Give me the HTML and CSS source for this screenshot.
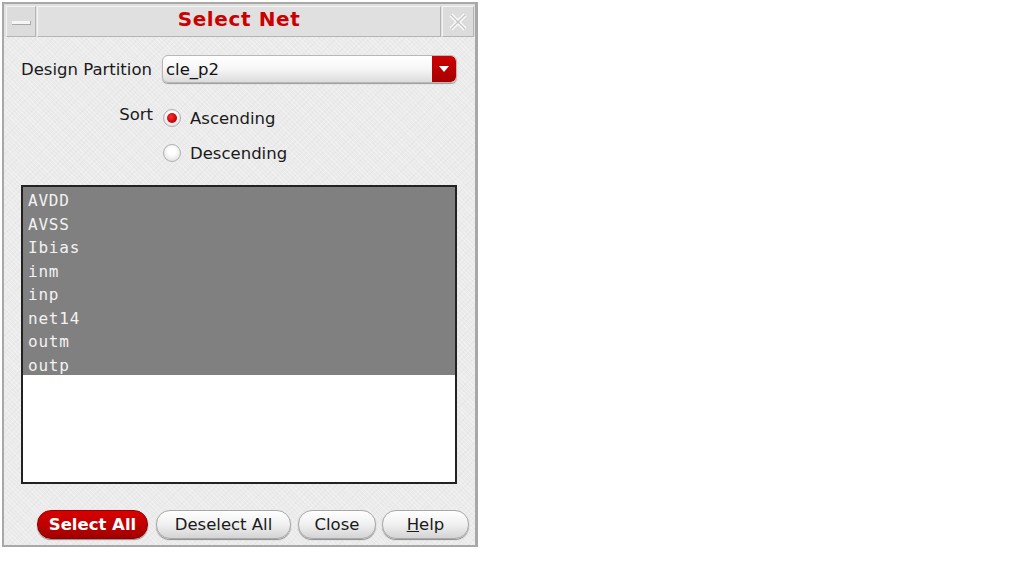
FILE: index.html
```html
<!DOCTYPE html>
<html>
<head>
<meta charset="utf-8">
<link rel="stylesheet" href="styles.css">
</head>
<body>
<div class="dialog">
  <div class="titlebar">
    <div class="tb-btn min"><span class="dash"></span></div>
    <div class="title">Select Net</div>
    <div class="tb-btn close">
      <svg width="22" height="22" viewBox="0 0 22 22"><path d="M4 4 L18 18 M18 4 L4 18" stroke="#fbfbfb" stroke-width="4" fill="none"/><path d="M4 4 L18 18 M18 4 L4 18" stroke="#c4c4c4" stroke-width="1.4" fill="none"/></svg>
    </div>
  </div>
  <div class="body">
    <div class="row-partition">
      <span class="label">Design Partition</span>
      <div class="combo">
        <span class="combo-text">cle_p2</span>
        <span class="combo-arrow"><svg width="10" height="6" viewBox="0 0 10 6"><path d="M0 0 H10 L5 6 Z" fill="#fff"/></svg></span>
      </div>
    </div>
    <div class="row-sort">
      <span class="sort-label">Sort</span>
      <div class="radios">
        <label class="radio-item"><span class="radio on"></span>Ascending</label>
        <label class="radio-item"><span class="radio"></span>Descending</label>
      </div>
    </div>
    <div class="list">
      <div class="item sel">AVDD</div>
      <div class="item sel">AVSS</div>
      <div class="item sel">Ibias</div>
      <div class="item sel">inm</div>
      <div class="item sel">inp</div>
      <div class="item sel">net14</div>
      <div class="item sel">outm</div>
      <div class="item sel">outp</div>
    </div>
    <div class="buttons">
      <button class="btn primary w-sel">Select All</button>
      <button class="btn w-desel">Deselect All</button>
      <button class="btn w-close">Close</button>
      <button class="btn w-help"><u>H</u>elp</button>
    </div>
  </div>
</div>
</body>
</html>
```
FILE: styles.css
```css
html, body {
  margin: 0;
  padding: 0;
  background: #ffffff;
}
body {
  font-family: "DejaVu Sans", sans-serif;
  color: #1a1a1a;
}
.dialog {
  margin: 2px 0 0 2px;
  width: 471px;
  height: 541px;
  border: 2px solid #a8a8a8;
  border-right-width: 3px;
  background-color: #ebebeb;
  background-image:
    repeating-linear-gradient(45deg, rgba(255,255,255,0.25) 0 1px, transparent 1px 3px),
    repeating-linear-gradient(-45deg, rgba(0,0,0,0.02) 0 1px, transparent 1px 4px);
  display: flex;
  flex-direction: column;
}
.titlebar {
  display: flex;
  align-items: stretch;
  background: #e0e0e0;
  padding: 2px 1px 0 2px;
  box-sizing: border-box;
  height: 33px;
}
.tb-btn {
  width: 30px;
  border: 1px solid #f4f4f4;
  border-right-color: #b4b4b4;
  border-bottom-color: #b4b4b4;
  background: #dcdcdc;
  box-sizing: border-box;
  display: flex;
  align-items: center;
  justify-content: center;
}
.min .dash {
  width: 18px;
  height: 3px;
  background: #f6f6f6;
  border-bottom: 1px solid #a8a8a8;
  border-right: 1px solid #a8a8a8;
  margin-top: 2px;
}
.close { width: 32px; }
.title {
  flex: 1;
  text-align: center;
  font-weight: bold;
  font-size: 20px;
  letter-spacing: 0.6px;
  color: #cc0000;
  line-height: 24px;
  padding-bottom: 4px;
  border: 1px solid #f4f4f4;
  border-right-color: #b4b4b4;
  border-bottom-color: #b4b4b4;
  margin: 0 1px;
  background: #e0e0e0;
}
.body {
  flex: 1;
  padding: 18px 0 0 17px;
  display: flex;
  flex-direction: column;
}
.row-partition {
  display: flex;
  align-items: center;
  height: 28px;
}
.label {
  font-size: 16.5px;
  width: 141px;
  flex: none;
}
.combo {
  width: 295px;
  height: 28px;
  flex: none;
  box-sizing: border-box;
  border-radius: 6px;
  border: 1px solid #b8b8b8;
  background: linear-gradient(#ffffff 0%, #f6f6f6 50%, #dcdcdc 100%);
  display: flex;
  align-items: center;
  overflow: hidden;
  box-shadow: 0 1px 1px #9a9a9a;
}
.combo-text {
  flex: 1;
  font-size: 16.5px;
  padding-left: 3px;
  color: #111;
}
.combo-arrow {
  width: 24px;
  height: 100%;
  background: linear-gradient(#cc0000, #a80000);
  display: flex;
  align-items: center;
  justify-content: center;
  border-radius: 0 5px 5px 0;
}
.row-sort {
  display: flex;
  margin-top: 23px;
}
.sort-label {
  width: 142px;
  flex: none;
  text-align: right;
  font-size: 16.5px;
  line-height: 24px;
  padding-right: 10px;
  box-sizing: border-box;
  margin-top: -3px;
}
.radios {
  display: flex;
  flex-direction: column;
  gap: 11px;
}
.radio-item {
  display: flex;
  align-items: center;
  font-size: 16.5px;
  height: 24px;
  gap: 9px;
}
.radio {
  width: 18px;
  height: 18px;
  border-radius: 50%;
  box-sizing: border-box;
  border: 1px solid #b0b0b0;
  background: radial-gradient(circle at 50% 40%, #ffffff 30%, #d6d6d6 100%);
  display: flex;
  align-items: center;
  justify-content: center;
}
.radio.on::after {
  content: "";
  width: 10px;
  height: 10px;
  border-radius: 50%;
  background: radial-gradient(circle at 40% 40%, #ff3030, #c00000 70%, #900000);
}
.list {
  margin-top: 20px;
  width: 436px;
  height: 299px;
  flex: none;
  box-sizing: border-box;
  border: 2px solid #222;
  background: #ffffff;
}
.item {
  font-family: "DejaVu Sans Mono", monospace;
  font-size: 16px;
  letter-spacing: 0.8px;
  height: 23.5px;
  box-sizing: border-box;
  padding-top: 4px;
  line-height: 19.5px;
  padding-left: 5px;
  color: #111;
}
.item.sel {
  background: #808080;
  color: #f2f2f2;
}
.buttons {
  display: flex;
  margin-top: 26px;
  padding-left: 16px;
  gap: 7px;
}
.btn {
  flex: none;
  height: 29px;
  border-radius: 14px;
  font-family: "DejaVu Sans", sans-serif;
  font-size: 16.5px;
  color: #1a1a1a;
  border: 1px solid #a8a8a8;
  background: linear-gradient(#ffffff 0%, #f0f0f0 50%, #d4d4d4 100%);
  box-shadow: 0 1px 1px #8c8c8c;
  padding: 0;
}
.btn u { text-decoration: underline; }
.btn.primary {
  background: linear-gradient(#d80000 0%, #c00000 50%, #a00000 100%);
  color: #ffffff;
  font-weight: bold;
  border-color: #900000;
}
.w-sel { width: 111px; }
.w-desel { width: 135px; margin-left: 1px; }
.w-close { width: 78px; }
.w-help { width: 87px; margin-left: -1px; }
```
